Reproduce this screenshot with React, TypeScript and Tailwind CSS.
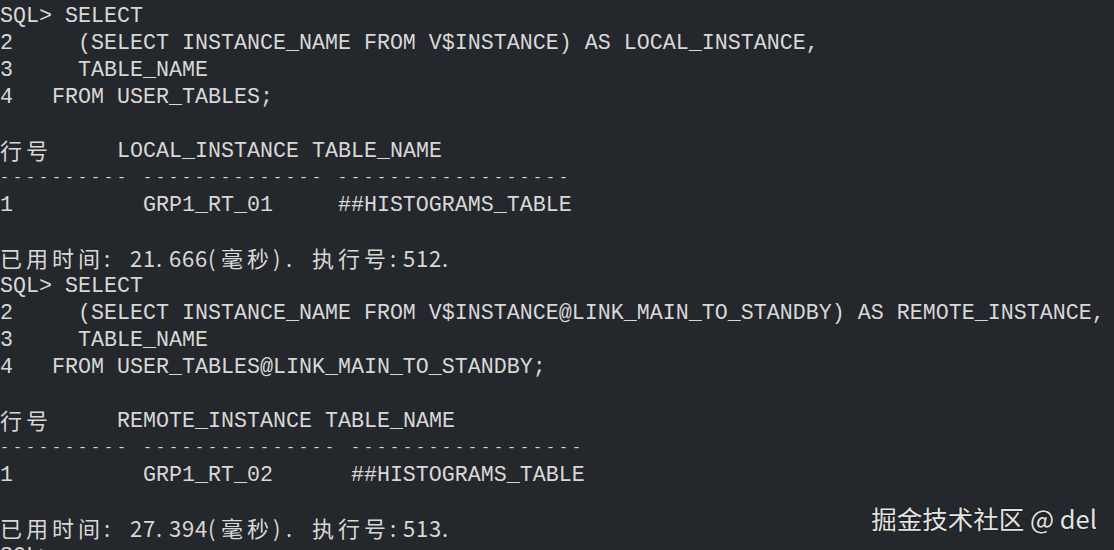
import React from "react";

type Seg = { t: string; cjk?: boolean; dash?: boolean };
type Line = Seg[];

const mono = (t: string): Line => [{ t }];
const dashes = (t: string): Line => [{ t, dash: true }];

const isWide = (ch: string) => (ch.codePointAt(0) ?? 0) > 0x2e80;

// terminal cells: half-width 13px, wide 26px
const Cells = ({ text }: { text: string }) => (
  <>
    {Array.from(text).map((ch, i) => (
      <span
        key={i}
        className={isWide(ch) ? "inline-block w-[26px] whitespace-pre" : "inline-block w-[13px] whitespace-pre"}
      >
        {ch}
      </span>
    ))}
  </>
);

const lines: Line[] = [
  mono("SQL> SELECT"),
  mono("2     (SELECT INSTANCE_NAME FROM V$INSTANCE) AS LOCAL_INSTANCE,"),
  mono("3     TABLE_NAME"),
  mono("4   FROM USER_TABLES;"),
  mono(""),
  [{ t: "行号", cjk: true }, { t: "     LOCAL_INSTANCE TABLE_NAME" }],
  dashes("---------- -------------- ------------------"),
  mono("1          GRP1_RT_01     ##HISTOGRAMS_TABLE"),
  mono(""),
  [{ t: "已用时间: 21.666(毫秒). 执行号:512.", cjk: true }],
  mono("SQL> SELECT"),
  mono("2     (SELECT INSTANCE_NAME FROM V$INSTANCE@LINK_MAIN_TO_STANDBY) AS REMOTE_INSTANCE,"),
  mono("3     TABLE_NAME"),
  mono("4   FROM USER_TABLES@LINK_MAIN_TO_STANDBY;"),
  mono(""),
  [{ t: "行号", cjk: true }, { t: "     REMOTE_INSTANCE TABLE_NAME" }],
  dashes("---------- --------------- ------------------"),
  mono("1          GRP1_RT_02      ##HISTOGRAMS_TABLE"),
  mono(""),
  [{ t: "已用时间: 27.394(毫秒). 执行号:513.", cjk: true }],
  mono("SQL> "),
];

export default function App() {
  return (
    <div className="relative h-[550px] w-[1114px] overflow-hidden bg-[#24272b] pt-[3px] text-[#d8d8d8]">
      <div className="flex flex-col">
        {lines.map((line, i) => (
          <div key={i} className="flex h-[27px] items-center whitespace-pre">
            {line.map((seg, j) =>
              seg.cjk ? (
                <span key={j} className="mb-[4px] flex font-['Noto_Sans_CJK_SC',sans-serif] text-[22px] leading-[27px]">
                  <Cells text={seg.t} />
                </span>
              ) : seg.dash ? (
                <span key={j} className="flex font-['Liberation_Mono',monospace] text-[15px] leading-[27px]">
                  <Cells text={seg.t} />
                </span>
              ) : (
                <span key={j} className="font-['Liberation_Mono',monospace] text-[21.67px] leading-[27px]">
                  {seg.t}
                </span>
              )
            )}
          </div>
        ))}
      </div>
      <div className="absolute bottom-[16px] right-[17px] font-['Noto_Sans_CJK_SC',sans-serif] text-[25.5px] leading-[32px] text-[#e2e2e2] [text-shadow:0_0_2px_rgba(0,0,0,0.6)]">
        掘金技术社区 @ del
      </div>
    </div>
  );
}
